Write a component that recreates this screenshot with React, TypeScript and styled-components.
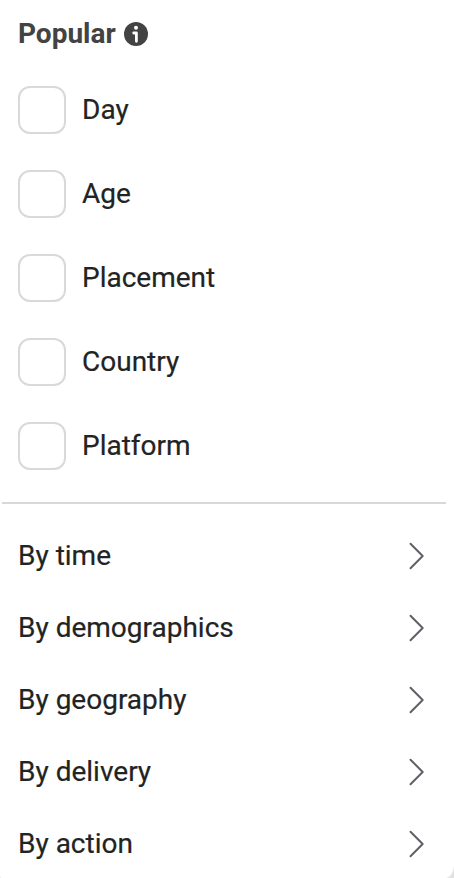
import React from "react";
import styled, { createGlobalStyle } from "styled-components";

const GlobalStyle = createGlobalStyle`
  * { box-sizing: border-box; }
  html { background: #e2e2e2; overflow: hidden; }
  body { margin: 0; font-family: Roboto, sans-serif; color: #222323; }
`;

const Panel = styled.main`
  width: 454px;
  height: 878px;
  background: #fff;
  border-radius: 0 0 9px 2px / 0 0 13px 2px;
  overflow: hidden;
`;

const Heading = styled.h2`
  display: flex;
  align-items: center;
  gap: 8px;
  height: 68px;
  margin: 0;
  padding-left: 18px;
  font-size: 28px;
  font-weight: 700;
  line-height: 36px;
  color: #434343;
`;

const InfoIcon = styled.svg`
  display: block;
  width: 24px;
  height: 24px;
`;

const Options = styled.div`
  display: flex;
  flex-direction: column;
  height: 434px;
`;

const Option = styled.label`
  display: flex;
  align-items: center;
  gap: 16px;
  height: 84px;
  padding-left: 18px;
  font-size: 28px;
  line-height: 36px;
  -webkit-text-stroke: 0.2px currentColor;
`;

const Checkbox = styled.input`
  appearance: none;
  width: 48px;
  height: 48px;
  margin: 0;
  border: 2px solid #d9d9d9;
  border-radius: 12px;
  background: #fff;
`;

const Divider = styled.hr`
  height: 2px;
  margin: 0 8px 0 2px;
  border: 0;
  background: #d8d8d8;
`;

const Groups = styled.nav`
  padding-top: 16px;
`;

const Group = styled.button`
  display: flex;
  align-items: center;
  justify-content: space-between;
  width: 100%;
  height: 72px;
  padding: 0 29px 0 18px;
  border: 0;
  background: none;
  color: inherit;
  font: 400 28px/36px Roboto, sans-serif;
  text-align: left;
  -webkit-text-stroke: 0.2px currentColor;
`;

const Chevron = styled.svg`
  display: block;
  width: 16px;
  height: 28px;
  fill: none;
  stroke: #5f6168;
  stroke-width: 2;
  stroke-linecap: round;
  stroke-linejoin: round;
`;

const options = ["Day", "Age", "Placement", "Country", "Platform"];
const groups = ["By time", "By demographics", "By geography", "By delivery", "By action"];

export default function App() {
  return (
    <Panel>
      <GlobalStyle />
      <Heading>
        Popular
        <InfoIcon viewBox="0 0 24 24" aria-hidden="true">
          <circle cx="12" cy="12" r="12" fill="#434343" />
          <circle cx="12" cy="5.8" r="2" fill="#fff" />
          <path
            d="M9.700 11h2.700v8.300"
            fill="none"
            stroke="#fff"
            strokeWidth="2.800"
            strokeLinecap="round"
            strokeLinejoin="round"
          />
        </InfoIcon>
      </Heading>
      <Options>
        {options.map((name) => (
          <Option key={name}>
            <Checkbox type="checkbox" />
            <span>{name}</span>
          </Option>
        ))}
      </Options>
      <Divider />
      <Groups>
        {groups.map((name) => (
          <Group key={name}>
            {name}
            <Chevron viewBox="0 0 16 28" aria-hidden="true">
              <path d="M1.500 1.700 13.700 14 1.500 26.300" />
            </Chevron>
          </Group>
        ))}
      </Groups>
    </Panel>
  );
}
